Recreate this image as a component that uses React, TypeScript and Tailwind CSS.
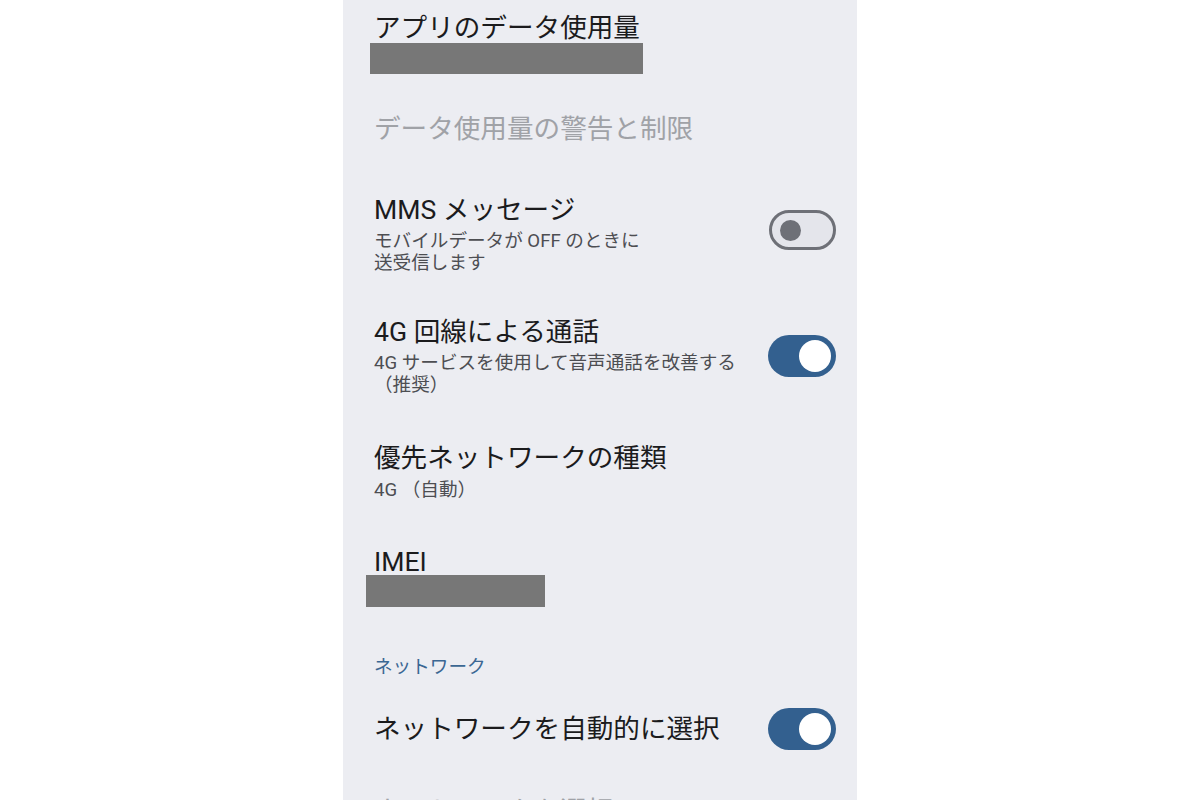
import React from 'react';

const font = { fontFamily: 'Roboto, "Noto Sans CJK JP", sans-serif' };

const Toggle: React.FC<{ on: boolean; className?: string }> = ({ on, className = '' }) =>
  on ? (
    <div className={`w-[68px] h-[42px] rounded-full bg-[#33608f] flex items-center justify-end pr-[5px] shrink-0 ${className}`}>
      <div className="w-[32px] h-[32px] rounded-full bg-white" />
    </div>
  ) : (
    <div className={`w-[67px] h-[40px] rounded-full bg-[#e4e5eb] border-[3px] border-[#6e7077] flex items-center pl-[8px] shrink-0 ${className}`}>
      <div className="w-[21px] h-[21px] rounded-full bg-[#6e7077]" />
    </div>
  );

const Title: React.FC<{ children: React.ReactNode; muted?: boolean }> = ({ children, muted }) => (
  <div className={`text-[26.6px] leading-[32px] ${muted ? 'text-[#a0a2a7]' : 'text-[#1b1b1d]'}`}>{children}</div>
);

const Sub: React.FC<{ children: React.ReactNode }> = ({ children }) => (
  <div className="text-[18.6px] leading-[22px] text-[#4d4e52] whitespace-nowrap">{children}</div>
);

export default function App() {
  return (
    <div className="w-full h-[800px] bg-white flex justify-center overflow-hidden" style={font}>
      <div className="w-[514px] bg-[#ecedf2] flex flex-col">
        <div className="h-[7px] bg-[#e1e4ed]" />
        <div className="pl-[31px] pr-[21px] flex flex-col">
          {/* data usage */}
          <div className="mt-[12px]">
            <Title>アプリのデータ使用量</Title>
            <div className="-mt-[1px] -ml-[4px] w-[273px] h-[31px] bg-[#777777]" />
          </div>

          <div className="mt-[39px]">
            <Title muted>データ使用量の警告と制限</Title>
          </div>

          <div className="mt-[49px] flex items-center justify-between">
            <div>
              <Title>MMS メッセージ</Title>
              <div className="mt-[4px]">
                <Sub>モバイルデータが OFF のときに</Sub>
                <Sub>送受信します</Sub>
              </div>
            </div>
            <Toggle on={false} className="mb-[8px]" />
          </div>

          <div className="mt-[42px] flex items-center justify-between">
            <div>
              <Title>4G 回線による通話</Title>
              <div className="mt-[4px]">
                <Sub>4G サービスを使用して音声通話を改善する</Sub>
                <Sub>（推奨）</Sub>
              </div>
            </div>
            <Toggle on />
          </div>

          <div className="mt-[46px]">
            <Title>優先ネットワークの種類</Title>
            <div className="mt-[5px]">
              <Sub>4G （自動）</Sub>
            </div>
          </div>

          <div className="mt-[45px]">
            <Title>IMEI</Title>
            <div className="-mt-[3px] -ml-[8px] w-[179px] h-[32px] bg-[#777777]" />
          </div>

          <div className="mt-[49px] text-[18.6px] leading-[22px] text-[#3b6793]">ネットワーク</div>

          <div className="mt-[30px] flex items-center justify-between">
            <Title>ネットワークを自動的に選択</Title>
            <Toggle on />
          </div>

          <div className="mt-[45px]">
            <Title muted>ネットワークを選択</Title>
          </div>
        </div>
      </div>
    </div>
  );
}
